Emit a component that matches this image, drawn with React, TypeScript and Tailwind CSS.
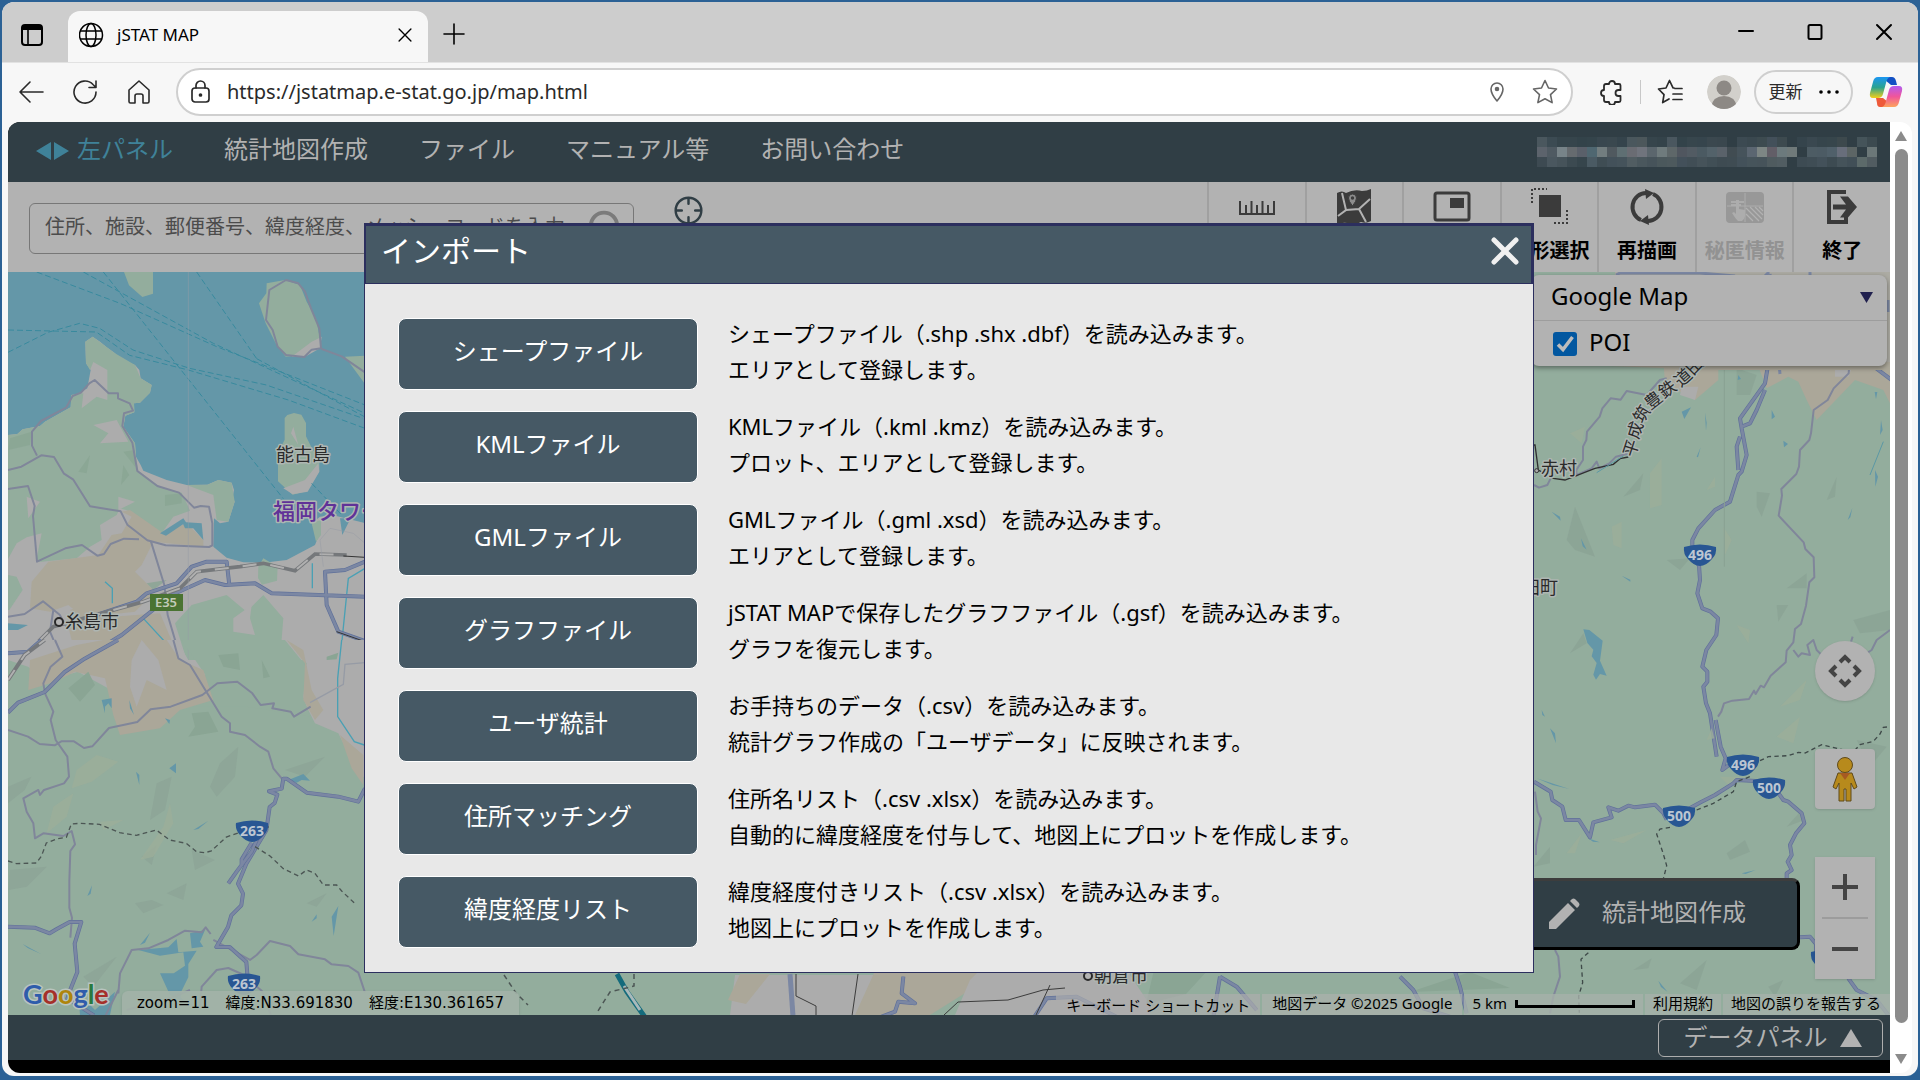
import type { ReactNode } from 'react';

const IMPORT_ITEMS = [
  { label: 'シェープファイル', lines: ['シェープファイル（.shp .shx .dbf）を読み込みます。', 'エリアとして登録します。'] },
  { label: 'KMLファイル', lines: ['KMLファイル（.kml .kmz）を読み込みます。', 'プロット、エリアとして登録します。'] },
  { label: 'GMLファイル', lines: ['GMLファイル（.gml .xsd）を読み込みます。', 'エリアとして登録します。'] },
  { label: 'グラフファイル', lines: ['jSTAT MAPで保存したグラフファイル（.gsf）を読み込みます。', 'グラフを復元します。'] },
  { label: 'ユーザ統計', lines: ['お手持ちのデータ（.csv）を読み込みます。', '統計グラフ作成の「ユーザデータ」に反映されます。'] },
  { label: '住所マッチング', lines: ['住所名リスト（.csv .xlsx）を読み込みます。', '自動的に緯度経度を付与して、地図上にプロットを作成します。'] },
  { label: '緯度経度リスト', lines: ['緯度経度付きリスト（.csv .xlsx）を読み込みます。', '地図上にプロットを作成します。'] },
];

const MENU = ['統計地図作成', 'ファイル', 'マニュアル等', 'お問い合わせ'];

const MASKED_USER = [
  '4a575e 3c4b53 36454c 36454c 33434a 34444b 39474f 3a484f 35444c 4a575d 4c575b 36454c 34434a 4a575f 33434a 37464d 36454d 3b484f 3a474e 303e45 3c4a52 3a484f 3d4b50 43505a 3d4a4f 303e45 35444c 3a4850 36454c 37464c 3d494d 303e45 45545a 3c4a50',
  '5c636c 4f5a62 788489 666b6f 5a606a 4f6771 727d7f 50595f 5f6f73 6a6c73 70747d 5b666d 6f7b7d 5e6769 50565f 525b63 4b5a62 53626a 5a626a 414c52 46535b 5b6671 7d8684 625e67 6c7a7d 707a7a 303e45 4d5c64 4c5b64 50606a 686e7b 5c6565 303e45 6b7778',
  '3d4a52 4a575f 46535a 3c4a51 36454c 4a5a63 3f4d54 43515a 45535b 515d62 4a575d 46535a 4b585c 4d595d 43505a 414e56 46535a 414f56 3e4b52 3f4c53 43515a 46545b 46535a 4f5b5f 515d62 303e45 3d4b53 3f4d55 43515a 3d4b52 45535a 414f57 5c6a6a 515c61',
].map((row) => row.split(' '));

function Stroke({ size = 26, w = 1.6, children }: { size?: number; w?: number; children: ReactNode }) {
  return (
    <svg
      width={size}
      height={size}
      viewBox="0 0 26 26"
      fill="none"
      stroke="currentColor"
      strokeWidth={w}
      strokeLinecap="round"
      strokeLinejoin="round"
      aria-hidden="true"
      className="shrink-0"
    >
      {children}
    </svg>
  );
}

function TabBar() {
  return (
    <div className="flex h-[60px] items-stretch bg-[#cdcdcd] text-black">
      <button aria-label="タブ操作" className="flex w-[66px] items-center justify-center pr-[6px] pt-[6px]">
        <Stroke w={2}>
          <rect x="3" y="3" width="20" height="20" rx="3" />
          <path d="M3 6.500h20M9 8v15" strokeWidth="1.6" />
          <path d="M4 4h18v4H4z" fill="currentColor" stroke="none" />
        </Stroke>
      </button>
      <div className="mt-[9px] flex w-[360px] items-center rounded-t-xl bg-[#f7f7f7] pb-1 pl-[11px] pr-3">
        <Stroke w={1.5}>
          <circle cx="12" cy="13" r="11.5" />
          <ellipse cx="12" cy="13" rx="5" ry="11.5" />
          <path d="M1.500 9h21M1.500 17h21" />
        </Stroke>
        <span className="ml-3 flex-1 text-[17px]">jSTAT MAP</span>
        <button aria-label="タブを閉じる">
          <Stroke size={22}>
            <path d="M6 6l14 14M20 6L6 20" />
          </Stroke>
        </button>
      </div>
      <button aria-label="新しいタブ" className="flex w-[52px] items-center justify-center pt-1">
        <Stroke>
          <path d="M13 3v20M3 13h20" />
        </Stroke>
      </button>
      <div className="ml-auto flex">
        <button aria-label="最小化" className="flex w-[69px] items-center justify-center">
          <Stroke w={2}>
            <path d="M6 12h14" />
          </Stroke>
        </button>
        <button aria-label="最大化" className="flex w-[69px] items-center justify-center">
          <Stroke w={2}>
            <rect x="6.500" y="6" width="13" height="14" rx="1.500" />
          </Stroke>
        </button>
        <button aria-label="閉じる" className="flex w-[69px] items-center justify-center">
          <Stroke w={2}>
            <path d="M6 6l14 14M20 6L6 20" />
          </Stroke>
        </button>
      </div>
    </div>
  );
}

function CopilotLogo() {
  return (
    <svg width="34" height="32" viewBox="0 0 34 32" aria-hidden="true">
      <defs>
        <linearGradient id="cp1" x1="0" y1="0" x2="0" y2="1">
          <stop offset="0" stopColor="#1b96f3" />
          <stop offset="0.5" stopColor="#2aa38f" />
          <stop offset="1" stopColor="#f3cf17" />
        </linearGradient>
        <linearGradient id="cp2" x1="0" y1="0" x2="0" y2="1">
          <stop offset="0" stopColor="#b35cf0" />
          <stop offset="0.5" stopColor="#f0559b" />
          <stop offset="1" stopColor="#fda35c" />
        </linearGradient>
      </defs>
      <path d="M16 1h7q3 0 4 4l1 4h-6l-6-5z" fill="#1351c4" />
      <path d="M18 31h-7q-3 0-3-4l-1-5h7l5 4z" fill="#ee5a3a" />
      <path d="M9 1h12q-3 1-4 6l-3 11q-1 4-5 4H4q-4 0-3-5L4 6q1-5 5-5z" fill="url(#cp1)" />
      <path d="M25 31H13q3-1 4-6l3-11q1-4 5-4h5q4 0 3 5l-3 11q-1 5-5 5z" fill="url(#cp2)" />
    </svg>
  );
}

function AddressBar() {
  return (
    <div className="flex h-[60px] items-center border-t border-[#e2e2e2] bg-[#f7f7f7] pb-[2px] pl-4 pr-[15px] text-[#2a2a2a]">
      <div className="flex gap-[28px]">
        <button aria-label="戻る">
          <Stroke>
            <path d="M25 13H2M12 3L2 13l10 10" />
          </Stroke>
        </button>
        <button aria-label="更新">
          <Stroke>
            <path d="M24 13a11 11 0 1 1-3-7.500l3 3M24 2v6.500h-7" />
          </Stroke>
        </button>
        <button aria-label="ホーム">
          <Stroke>
            <path d="M3 11L13 2l10 9v11.500q0 1.500-1.500 1.500H17v-7q0-2-2-2h-4q-2 0-2 2v7H4.500Q3 24 3 22.500z" />
          </Stroke>
        </button>
      </div>
      <div className="ml-6 flex h-12 flex-1 items-center rounded-full border-2 border-[#cfcfcf] bg-white pl-[9px] pr-[13px]">
        <Stroke w={1.7}>
          <rect x="5" y="9" width="17" height="14" rx="3" />
          <path d="M9 9V6.500a4.500 4.500 0 0 1 9 0V9" />
          <circle cx="13.500" cy="16" r="1" fill="currentColor" />
        </Stroke>
        <input
          aria-label="アドレス"
          readOnly
          defaultValue="https://jstatmap.e-stat.go.jp/map.html"
          className="ml-[14px] min-w-0 flex-1 bg-transparent text-[20px] outline-none"
        />
        <span className="flex items-center gap-[22px] text-[#666]">
          <button aria-label="位置情報">
            <Stroke>
              <path d="M13 22q-6-7-6-12a6 6 0 0 1 12 0q0 5-6 12z" />
              <circle cx="13" cy="10" r="1.500" fill="currentColor" />
            </Stroke>
          </button>
          <button aria-label="お気に入りに追加">
            <Stroke>
              <path d="M13 1.500l3.500 7.500 8 1-6 5.600 1.600 8L13 19.700 5.900 23.600l1.600-8-6-5.600 8-1z" />
            </Stroke>
          </button>
        </span>
      </div>
      <button aria-label="拡張機能" className="ml-[25px]">
        <Stroke w={1.8}>
          <path d="M8 5h3a3 3 0 0 1 6 0h4q1.500 0 1.500 1.500V11h-2a3 3 0 0 0 0 6h2v4.500q0 1.500-1.500 1.500h-4a3 3 0 0 1-6 0H8q-2 0-2-2v-4a3 3 0 0 1 0-6V7q0-2 2-2z" />
        </Stroke>
      </button>
      <span className="mx-4 h-6 w-px bg-[#c8c8c8]" />
      <button aria-label="お気に入り">
        <Stroke w={1.7}>
          <path d="M17 9l-1-.2L12.500 1.500 9 9l-7.500 1 5.500 5.600-1.300 8L12 20M18 9.500h7M16 15h9M16 20.500h9" />
        </Stroke>
      </button>
      <button aria-label="プロフィール" className="ml-6">
        <svg width="34" height="34" viewBox="0 0 34 34" aria-hidden="true" className="rounded-full">
          <circle cx="17" cy="17" r="17" fill="#d2d0cb" />
          <circle cx="17" cy="13" r="7.500" fill="#8d8985" />
          <path d="M4 32q2-11 13-11t13 11l-4 2H8z" fill="#8d8985" />
        </svg>
      </button>
      <button className="ml-[13px] flex h-11 w-[99px] items-center justify-center gap-4 rounded-full border-2 border-[#cfcfcf] text-[17px]">
        更新
        <svg width="20" height="4" viewBox="0 0 20 4" aria-hidden="true">
          <circle cx="2" cy="2" r="1.800" />
          <circle cx="10" cy="2" r="1.800" />
          <circle cx="18" cy="2" r="1.800" />
        </svg>
      </button>
      <button aria-label="Copilot" className="ml-4">
        <CopilotLogo />
      </button>
    </div>
  );
}

function MenuBar() {
  return (
    <nav className="flex h-[60px] items-center bg-[#303e45] pl-7 pr-[13px] text-2xl text-[#b2b2b2]">
      <ul className="flex items-center gap-[51px] pb-[6px]">
        <li>
          <a href="#panel" className="flex items-center gap-2 text-[#3f8299]">
            <svg width="33" height="18" viewBox="0 0 33 18" fill="currentColor" aria-hidden="true" className="mt-1">
              <path d="M15 0v18L0 9zM18 0v18l15-9z" />
            </svg>
            左パネル
          </a>
        </li>
        {MENU.map((m) => (
          <li key={m}>
            <a href="#menu">{m}</a>
          </li>
        ))}
      </ul>
      <svg width="340" height="30" viewBox="0 0 340 30" shapeRendering="crispEdges" aria-hidden="true" className="ml-auto">
        {MASKED_USER.map((row, y) =>
          row.map((c, x) => <rect key={`${x}-${y}`} x={x * 10} y={y * 10} width="10" height="10" fill={`#${c}`} />),
        )}
      </svg>
    </nav>
  );
}

const TOOLS: { label: string; disabled?: boolean; icon: ReactNode }[] = [
  {
    label: '距離計測',
    icon: <path d="M2 13v13h34V13M8 26v-9M13.500 26V13M19 26v-9M24.500 26V13M30 26v-9" fill="none" stroke="currentColor" strokeWidth="2" />,
  },
  {
    label: '背景地図',
    icon: (
      <>
        <path d="M2 5q5-3 9 0 8-4 16-2 5 0 9-2v32q-5 3-10 1-7 4-14 1-5-1-10 2z" fill="currentColor" />
        <path d="M7 5l4 17-8 6M11 22l13-1 11-10M24 21l7 13" fill="none" stroke="#b2b2b2" strokeWidth="2" />
        <path d="M17.500 18q-4-5-4-8a4 4 0 0 1 8 0q0 3-4 8z" fill="#8c8c8c" stroke="#3b3b3b" />
        <circle cx="17.500" cy="10" r="1.700" fill="#3b3b3b" />
      </>
    ),
  },
  {
    label: '索引図',
    icon: (
      <>
        <rect x="2" y="5" width="34" height="27" rx="2" fill="none" stroke="currentColor" strokeWidth="3" />
        <rect x="17" y="10" width="14" height="10" fill="currentColor" />
      </>
    ),
  },
  {
    label: '図形選択',
    icon: (
      <>
        <rect x="8" y="7" width="22" height="22" fill="currentColor" />
        <path d="M1 15V1h15M36 22v13H21" fill="none" stroke="currentColor" strokeWidth="2" strokeDasharray="2 2" />
      </>
    ),
  },
  {
    label: '再描画',
    icon: (
      <>
        <path d="M13 32A13.500 14 0 0 1 18 5M25 6a13.500 14 0 0 1-5 27" fill="none" stroke="currentColor" strokeWidth="4" />
        <path d="M17 1l9 4-8 6zM21 37l-9-4 8-6z" fill="currentColor" />
      </>
    ),
  },
  {
    label: '秘匿情報',
    disabled: true,
    icon: (
      <>
        <rect x="0" y="4" width="38" height="31" rx="4" fill="#989898" />
        <path d="M19 5v29M1 18h36" stroke="#adadad" />
        <path d="M20 20l13 13M20 26l7 7M24 19l12 12M29 19l8 8M33 19l4 4" stroke="#b2b2b2" strokeWidth="1.200" />
        <path d="M5 14h13M5 17h10" stroke="#b2b2b2" strokeWidth="1.500" />
        <path d="M10 12h3v9l6 1v6q-1 4-3 5h-4q-3-3-6-8l2-1 2 2z" fill="#adadad" />
      </>
    ),
  },
  {
    label: '終了',
    icon: (
      <>
        <path d="M23 4H6v30h17v-5" fill="none" stroke="currentColor" strokeWidth="4" />
        <path d="M10 16.500h13l-6-8h8l9 10.500-9 10.500h-8l6-8H10z" fill="currentColor" />
      </>
    ),
  },
];

function ToolBar() {
  return (
    <div className="flex h-[90px] bg-[#b2b2b2]">
      <div className="ml-[21px] mt-[21px] flex h-[51px] w-[605px] items-center rounded-md border border-[#777] pl-[15px] pr-3">
        <input
          aria-label="検索"
          placeholder="住所、施設、郵便番号、緯度経度、メッシュコードを入力"
          className="min-w-0 flex-1 bg-transparent pb-1 text-xl outline-none placeholder:text-[#4c4c4c]"
        />
        <button aria-label="検索する" className="pb-1 text-[#7b7b7b]">
          <Stroke size={34} w={3}>
            <circle cx="13" cy="12" r="10" />
            <path d="M20 19l5 6" />
          </Stroke>
        </button>
      </div>
      <button aria-label="現在地" className="ml-10 mt-[14px] h-7 text-[#303e45]">
        <Stroke size={29} w={2.2}>
          <circle cx="13" cy="13" r="11.5" />
          <path d="M13 2v5M13 19v5M2 13h5M19 13h5" />
        </Stroke>
      </button>
      <div className="ml-auto flex w-[683px]">
        {TOOLS.map((t) => (
          <button
            key={t.label}
            disabled={t.disabled}
            className="flex flex-1 flex-col items-center border-l-2 border-[#a0a0a0] pt-[6px] text-xl font-bold text-black disabled:text-[#929292]"
          >
            <svg width="38" height="38" viewBox="0 0 38 38" className="text-[#3b3b3b]" aria-hidden="true">
              {t.icon}
            </svg>
            <span className="mt-[10px] whitespace-nowrap leading-[30px]">{t.label}</span>
          </button>
        ))}
      </div>
    </div>
  );
}

function Road({ d, big }: { d: string; big?: boolean }) {
  return (
    <g fill="none" strokeLinejoin="round">
      {big && <path d={d} stroke="#60719a" strokeWidth="12" />}
      <path d={d} stroke={big ? '#7b87a3' : '#80869a'} strokeWidth={big ? 8 : 6} />
    </g>
  );
}

function Shield({ x, y, n }: { x: number; y: number; n: string }) {
  return (
    <g transform={`translate(${x} ${y})`}>
      <path d="M-16-8q16-5 32 0 1 7-4 12-6 7-12 7t-12-7q-5-5-4-12z" fill="#285693" />
      <text y="5" textAnchor="middle" fontSize="14" fontWeight="700" fill="#bcc6d2">
        {n}
      </text>
    </g>
  );
}

const RAIL_LABEL: [string, number, number, number][] = [
  ['平', 1637, 450, -72],
  ['成', 1641, 432, -72],
  ['筑', 1647, 417, -58],
  ['豊', 1657, 405, -38],
  ['鉄', 1671, 394, -36],
  ['道', 1687, 382, -42],
  ['田', 1699, 370, -46],
];

// Terrain and roads are digitised in tiles at three units per pixel.
function MapCanvas() {
  return (
    <svg viewBox="8 272 1882 743" preserveAspectRatio="xMidYMid slice" className="absolute inset-0 h-full w-full" aria-hidden="true">
      <rect x="0" y="260" width="1900" height="780" fill="#93ad9d" />
      <g transform="translate(0 260) scale(.33333)">
        <path d="M0 0h1140v1200H0z" fill="#6497a8" />
        <path
          fill="#acacac"
          d="M0 528L52 522 68 508 120 498 135 485 212 442 214 405 232 402 262 385 272 330 258 310 256 245 278 230 300 245 320 262 345 280 360 298 405 315 418 330 422 355 455 375 450 398 420 428 402 430 403 457 376 467 370 500 405 550 408 590 422 615 430 632 500 660 560 675 622 674 655 660 695 668 702 690 698 710 704 725 685 785 660 790 642 775 640 860 680 893 730 907 790 908 860 900 945 855 955 830 945 812 935 790 960 770 1000 766 1140 800V1200H0z"
        />
        <path
          fill="#93ad9d"
          d="M0 528L52 522 68 508 120 498 135 485 212 442 214 405 250 400 245 445 290 410 322 420 322 330 280 306 270 330 258 310 256 245 278 230 345 280 405 315 422 355 455 375 450 398 420 428 402 430 403 457 376 467 370 500 405 550 408 590 415 632 480 680 545 698 560 730 570 752 520 770 485 820 395 755 360 745 350 765 300 795 305 840 270 860 230 895 125 905 108 905 125 820 80 832 50 850 0 940z"
        />
        <path fill="#93ad9d" d="M560 675L622 674 655 660 695 668 704 725 685 785 650 780 640 705zM0 940l50 10 18 40-40 60H0zM775 920l15-25 43 25-2 42-45 12-12-20zM575 1035l105-30 60 50 50-50 60 70-10 125H560l-35-110zM935 790l28-10v45l-15 20z" />
        <path fill="#acacac" d="M280 495l70-15 35 65-85 5 25-30zM355 710l50 15-50 25zM700 1075l55-40-5 40 15 50-65-10zM80 710l40 15-35 50z" />
        <path fill="#aba799" d="M365 755l25-5 100 70 70-30 50 50v20l-150-15-35 70-20 20 60 60-60 60-90 10-50 20-60-50-55 20-60-10 5-80 50-60 150-20 40-60 30-5 30-50zM200 1080l280-20 60 140H230zM210 1050l80-30 40 50-60 30z" />
        <path fill="#8aa594" d="M30 535l65-20-5 40-65 15zM235 635l35-50-10 55zM370 575l35-5v50zM495 705l50-5v30l-50 8zM370 615l18 30-25 30zM410 75l28-30 4 60zM440 970l60-10-40 30z" opacity=".8" />
        <path fill="#93ad9d" d="M372 36h87v65l-32 10-40-35zM800 70l55-10 45 15 20 50 28 50 12 62-48 48-55 5-30-40-30-60-20-60 22-30zM1035 290l60-3v85zM862 465l20-6 22 5 14 25v40l20 40 20 25v40l-40 60-40 10-44-40v-85l20-40v-65z" />
        <path fill="#acacac" d="M880 500l15 55-22-35zM955 610l3 25-35 60-45 8-28-18 65-25zM965 230l-5 35-45 25-40 0 60-45z" />
        <path fill="#6497a8" d="M535 785l70 5 5 50-30-35-25 0-8-18zM480 820l70-45 8 12-60 40zM1020 775h32l-25 50zM24 1090l60 5-30 15H24z" />
        <g fill="none" stroke="#388a9e" strokeWidth="3" strokeDasharray="18 9">
          <path d="M110 36l250 94 290 130 445 175M250 36l390 214 455 210M310 36l230 290 310 390M590 36l180 260M24 210l265 6 100 70 176 44 300 90 230 85M24 277l120-60 95-27 60 15 100 65 170 55 230 50 290 100M770 296l325 175M935 670l90 95" />
        </g>
        <g fill="none" stroke="#4aa0b4" strokeWidth="6">
          <path d="M1095 925l-50 30-25 245M937 910v75M315 965l22 20v45M430 1075l60 65 12 35" strokeWidth="4" />
        </g>
        <Road d="M24 630l40-10 60-34 38 5 30 50 28 18 50 80 92 15 20 40 60 47 55 15 130 5 10-5V790l-10-50-25-2-20 5-45-45-65-20-60-45-15-85-30-50 5-38 27-8-10-22-35-15v-15h-28l-42-40-16 10-25 28-25 10-20 35-75 40-27 32v42l15 30M24 687l60-9 20 60-5 30 12 137 85-40 50-10 46 32 20-5 20-30 40-16 45 2" />
        <Road d="M858 60l-50 30-10 90 20 30 15 50 25 25 55 6 22-22 28-4-5-60-25-60-18-50-20-25zM965 267l60 22 70 48M453 845l40 130 10 90 40 135" />
        <Road d="M24 1070l50-8 55-38 50 40 20 36M160 1050l-10 65 38 90" />
        <Road big d="M290 1065l120-40 30-25 90-30 45-50 45-15h60l8 70M235 1205l130-80 150-120 100-45 60 15 90-5 50 30 280 10M1095 905l-60 25-60 5 5 100 35 80 85 30M24 1175h60l30-15" />
        <path d="M50 1200l30-20 80-80 270-75 110-40 50-50 130-15 70-10 95 22 60-50 95 3" fill="none" stroke="#75787b" strokeWidth="11" />
        <path d="M50 1200l30-20 80-80 270-75 110-40 50-50 130-15 70-10 95 22 60-50 95 3" fill="none" stroke="#b0b0b0" strokeWidth="6" strokeDasharray="42 42" />
        <path d="M1030 888l65 4M1010 1115l85 30" stroke="#333" strokeWidth="3" fill="none" />
        <path d="M960 840l10 80M960 840l30-35 70 15 35 30M565 36v1164" fill="none" stroke="#969ba5" strokeWidth="3" opacity=".5" />
      </g>
      <g transform="translate(0 640) scale(.33333)">
        <path fill="#93ad9d" d="M0 60h1140v1080H0z" />
        <path fill="#acacac" d="M0 60h24l60 20 60 40 90-25 90 50 65-40h240l5-45H565L530 0h330l60 70-15 100 40 80 70 30 35 70 60 90h40V0H0z" />
        <path fill="#93ad9d" d="M545 0h310l65 80-10 90 20 60-190-30-160 0 60-60z" />
        <path fill="#aba799" d="M90 60l140-45 80-15h190l40 60 70 30 30 90-100 30-60 55-120 20-20-60-25-110-90-20-60 30-80 25zM860 0l50 30 25 120 35 60-25 30-35-60 5-110zM1020 285l70 60v90l-35-50z" />
        <path fill="#acacac" d="M395 60l30-60 50 60 25 90-60-30-30 80-20-60z" />
        <path fill="#8aa594" d="M205 145l60-50 20 40-45 50zM575 220l50-5 30 60-90 15 20-30zM980 50l35-12-5 20-30 2zM655 45l60-5 5 50-50-10zM785 60l25 50-20 5z" />
        <path fill="#8ba395" opacity=".7" d="M24 440l70-30-20 40-50 40zM660 370l55-50-10 90-55 60 -20-30zM855 390l120-40-60 60zM470 430l45-20-20 100-45 30zM425 650l45-35-15 60zM30 690l110-10-60 60-55 10zM405 790l50-10 35 15-60 25zM500 760l60-30-10 50zM575 630l70 30-60 30zM920 790l60-30-30 40zM250 1010l100-60-70 90z" />
        <path fill="#9cae9a" opacity=".8" d="M230 390l60-45 65 20-80 60-60 20zM160 500l60-40-20 70-60 50zM420 660l70-100 20-70 10 60-60 100zM300 545l70-5-60 30z" />
        <path fill="#6497a8" d="M305 180l30-5v30l-10-15-10 10v20zM508 385l20-15v30zM865 420l45-18 20 20-25-2-15 8zM415 930l90-8 25-25 5 40 55-5-25 40v40l-20 40-5 30-20-30-15-5 5-40 45-30-5-40-70 10zM570 880l45-10-15 35 10 15-35 5zM480 1000l70 0-25 55 30 30-45-20zM235 1060l50 50 60-55-15 70H240zM495 235l15 5-2 12zM580 570l45-28-30 25zM262 768l14-32-4 25zM935 845l15-22v12zM995 830l20-32-14 90zM420 915l30-37-15 30zM68 912l55 30-40-18zM408 395l10 10v30zM388 180l14 45-12-20z" />
        <Road d="M165 0l22 50-35 30-22 50 5 30 25 55-8 25 15 60 35 50 5 60-15 20-60 20-12 15-5-15-45 25 10 40 20 35 5 45 25-15 60 8 25-15 10 40-14 20-3 90 0 80 8 30-5 60M24 270l60 20 35 22 45 4 20-12h38l30 20 25-5 50-55 85-18 40-38 60-8 95-35 45-35 60-5 45 35 25 35 40-5-5 15 55 10 10 15 50-30" />
        <Road d="M520 0l15 55 35 20 95 155 25 20v25l45 10 45 35 25 15 15 50 25 30M355 1060l5-60 35-70 50-5 60-25 50-28 50 5 12-15 15 20M640 900l110 60 20-15 40-42 60 15 25 25 80 15 20 15 50 5 30 20 20 60M600 1100l5-60 45-50 35-6 40 18 60 50 30 80M355 1050l-40 80M380 1110l130-35 60-25" />
        <Road big d="M24 218l30-30 80-32 60-60 60-40 100-56M24 860l80 3 45 17 20-12 40-22h35l-20 65 8 85-20 50-10 30 80 50M1095 445l-20 40-60-15-95-12-60-42-10 0-5 30-38 8 25 10-8 25-15 12-10 70-60 100-25 60 15 30-5 35-30 30-10 35-35 60 40 0 50 45 5 60M24 40l60-5 40-35" />
        <Road big d="M770 600l-15 35-45 60-25 35M755 608l-30 50v20" />
        <path d="M24 120l50-75 60-45" fill="none" stroke="#75787b" strokeWidth="12" />
        <path d="M24 120l50-75 60-45" fill="none" stroke="#b0b0b0" strokeWidth="6" strokeDasharray="36 36" />
        <path
          d="M24 663l25 8 60-2 15-20 15-40 30-12 30-5 15-40 25-2 60 3 60 25 50 8 60-16 40 30 50 10 30 25 25 3 20-5 45-42 90-30 40 0M765 620l45 28 40 38 45 22 25-18 25 10 25 35h40l15 18 40 38"
          fill="none"
          stroke="#4c5654"
          strokeWidth="4"
          strokeDasharray="14 10"
        />
        <path d="M1025 0l-12 115v115l50 75 30 10" fill="none" stroke="#4aa0b4" strokeWidth="4" />
        <path d="M1095 68l-60 5-5 60-100 55" fill="none" stroke="#969ba5" strokeWidth="4" />
      </g>

      {/* strip below the dialog */}
      <path fill="#acacac" d="M730 1015l5-40h160l20 40z" />
      <path fill="#aba799" d="M728 1000l12-26h30l-24 30zM880 960h110l-20 30-40 25h-75z" />
      <path fill="#acacac" d="M955 1015l15-35 20-20h130l30 45v10z" />
      <path fill="#8aa594" d="M1146 1004l8-34h54l-22 24zM1410 992l60-20 40 16z" />
      <g transform="translate(1500 940) scale(.33333)">
        <Road big d="M-300 110l40 40 30 55 80 25M-1790 110l-5 50 40 30-50-5-10 30-40 15v40M-160 40l20 40 20 60 20 80" />
        <Road big d="M-1400 235l40-60 90-5 120 60M-840 110l-20 120M-840 110l50 30 60 70" />
      </g>
      <path d="M617 974l10 18 20 28" stroke="#146b7c" strokeWidth="5" fill="none" />
      <path d="M624 986l16 24" stroke="#a9b9ba" strokeWidth="3" fill="none" />
      <path d="M944 1015l14-13 50-2 35-10 22-2M1036 1015l14-30M858 974l-6 42M796 974v22l20 10v10" stroke="#3c3c3c" fill="none" />
      <path d="M790 974l3 42" stroke="#7b87a3" strokeWidth="5" />
      <path d="M504 975l12 18 12 12M634 974v12l-24 6-14 22" stroke="#4c5654" strokeWidth="1.500" strokeDasharray="5 4" fill="none" />

      <g transform="translate(1520 340) scale(.33333)">
        <path fill="#aba799" d="M430 60h165v60l-70 60-90-50zM700 40h410v150l-20-40-85-30-115 120-30-60-25-55-30-15-65 35z" />
        <path fill="#acacac" d="M945 60h60l-20 50-40 0zM485 140l50 0-10 40-45-15z" />
        <path fill="#8ba395" opacity=".8" d="M650 85l60 20-20 60-40 0zM310 470l60-70-10 50zM710 455l40 5-25 70-15-30zM165 500l60 150-60-20-25-30zM440 660l70-5-30 35zM770 795l35 0-30 50zM1000 840l110-30v60l-90 10zM150 940l40-60 10 30zM920 480l30-70-5 60zM860 700l-60 45h60z" />
        <path fill="#9cae9a" opacity=".8" d="M390 400l35-45v140l-35 10zM275 560l30-15v80l-25-10zM610 560l25 40-20 45zM150 280l45-20-10 50zM560 450l25-40v30zM650 855l40 15-5 40zM780 1100l80-80-20 60z" />
        <path fill="#6497a8" d="M190 868l18 2 40 32-8 60 20 45-20-5-12 17-8-15 10-35-15-20 5-20-18-20zM485 215l28-13-20 35zM555 218l5 30-2 25zM755 210l10 20-10 8zM790 302l14 10-12 10zM655 105l8 12-10 3zM530 350l12-28-8 30zM1065 390l9 20-8 30zM1083 240l5 30-8 15zM983 540l14-36-6 28zM95 515l25 15 2 12zM183 595l17 34-12-10zM305 707l26 12v6zM65 1110l10 20-8-5zM1064 156h8l-4 22z" />
        <Road d="M440 115l-20 5-40 45-60-12-18 26-30-4-25 30-8 25-38 45-2 25-10 20v40l-20 30v20M170 405l45-20 15-20 8 20 30-15 20-20 40-10M988 75l-2 25-45 45-18 35-42 30-8 70-5 20-28 30-3 50-8 22-45 45 2 20-10 60 75 80 5 20 25 25 2 60-15 15-10 70-15 55-18 15-5 40-20 25-3 35-45 40-20 35-10-5-15 25-5-10-15 25-50 5-25 8-8 25-10 15M820 930l15 20 10-10 25 5-8-30 18-15 10 30 20 20M1110 870l-40 30-15 30-30 20-35-35 8-25" />
        <Road d="M42 435l15 8 25-8 10-20" />
        <Road big d="M745 70l-10 60-75 105 5 30 15 80-15 50-10 10-25 80-45 25-50 55-18 35 0 60 20 15 3 45-8 40 15 45 25 10 22 20-5 50-30 45-12 50 15 15v30l-12 15 8 50 12 30 20 130M735 150l-25 60-20 40-25 10M660 290l-10 30 5 70" />
        <Road big d="M1055 75l60 45" />
        <path d="M35 315h10l10 75 45 25 35 5 90-35 55-12 20-17 25-5" fill="none" stroke="#303030" strokeWidth="4" />
        <circle cx="50" cy="392" r="6" fill="#aaa" stroke="#333" strokeWidth="3" />
        <path d="M613 80v600" stroke="#89a193" strokeWidth="3" />
        <path d="M230 398l80-50M1090 305l-40 100" stroke="#5a98a5" strokeWidth="3" />
      </g>
      <g transform="translate(1520 720) scale(.33333)">
        <path fill="#8ba395" opacity=".8" d="M620 400l55-40 15 35-60 25zM800 320l45-50 8 30zM40 440l50-60v50zM745 800l45-20-25 50zM340 750l55-35-10 30zM480 790l80-70 -30 90zM1010 60l90 20-50 60z" />
        <path fill="#9cae9a" opacity=".8" d="M270 360l110-30-70 40zM140 400l45-60-20 60zM560 60l15-35 8 30zM770 50l70-60-20 80zM600 170l80 0-50 30z" />
        <path fill="#6497a8" d="M90 25l15 15 3 30zM50 175l98 32-50-12zM265 402l58 9zM598 437l42 5zM665 460l42-10-30 12zM415 782l28 34-20-15zM205 355l34 12-20-2z" />
        <Road d="M45 215l8 60 10 20-15 80v30M105 690l10 20 5 60-20 60-10 50" />
        <Road big d="M587 0l15 80 15 35-10 35 40-30M42 185l50 30 5 25 30 20 10 40 40 0 33 52 10-45 55-15-10-30 30 10 30-15 20 5 60-8 25 25 10 20M490 275l55-30 40-20 55-35 10-10 100 5 40 55 15 5 40 35 8 30-25 30-18 35 5 30-12 20 12 25-15 10v35M840 652l30-2 18 22v30M985 775l25 35 60 30 35 45" />
        <path
          d="M720 122l25-12 60-3 30-10 20 2 50-25 50 12 45 10 20-22 40-10 20-22 10-20 20-2M530 270l50-20 60-35 10-30 40-15M450 322l-30 5-10 15 20 60 10 35-10 40M205 698l-22 20 5 70-12 40 2 50"
          fill="none"
          stroke="#3f4a49"
          strokeWidth="4"
          strokeDasharray="13 10"
        />
      </g>

      {/* sliver visible above the layer switcher */}
      <path d="M1615 272h275v90h-275z" fill="#acaba3" />
      <path d="M1616 275l4-2h80l35 3M1765 276l4-4M1810 276v-4M1888 300v12M1780 374l-10-100" stroke="#7b87a3" strokeWidth="3" fill="none" />
      <path d="M1611 366h279v4h-180z" fill="#aba799" />

      <g fontSize="18" fill="#2a2a2a" stroke="#aeb6b2" strokeWidth="3" paintOrder="stroke" strokeLinejoin="round">
        <text x="276" y="461">能古島</text>
        <text x="65" y="628">糸島市</text>
        <text x="1541" y="475">赤村</text>
        <text x="1522" y="594">田町</text>
        <text x="1094" y="982">朝倉市</text>
        <text x="273" y="519" fontSize="22" fontWeight="500" fill="#603298">
          福岡タワー
        </text>
        {RAIL_LABEL.map(([c, x, y, r]) => (
          <text key={c} transform={`translate(${x} ${y}) rotate(${r})`} textAnchor="middle" fontSize="17">
            {c}
          </text>
        ))}
      </g>
      <g fill="#b4b4b4" stroke="#2a2a2a" strokeWidth="2">
        <circle cx="59" cy="622" r="4" />
        <circle cx="1088" cy="976" r="4" />
      </g>
      <rect x="150" y="594" width="33" height="17" fill="#4a7332" />
      <text x="166" y="607" textAnchor="middle" fontSize="13" fontWeight="600" fill="#c3cbb9">
        E35
      </text>
      <Shield x={252} y={831} n="263" />
      <Shield x={244} y={984} n="263" />
      <Shield x={1700} y={555} n="496" />
      <Shield x={1743} y={765} n="496" />
      <Shield x={1769} y={788} n="500" />
      <Shield x={1679} y={816} n="500" />
      <Shield x={1827} y={960} n="500" />
    </svg>
  );
}

function GoogleLogo() {
  return (
    <svg width="96" height="38" viewBox="0 0 96 38" aria-label="Google" className="absolute bottom-0 left-3">
      <text x="3" y="27" fontSize="27" fontWeight="700" fontFamily="Lato, sans-serif" stroke="#b9c4bf" strokeWidth="3" paintOrder="stroke">
        <tspan fill="#2f5cab">G</tspan>
        <tspan fill="#a5302a">o</tspan>
        <tspan fill="#ae850c">o</tspan>
        <tspan fill="#2f5cab">g</tspan>
        <tspan fill="#2a7a3d">l</tspan>
        <tspan fill="#a5302a">e</tspan>
      </text>
    </svg>
  );
}

function LayerPanel() {
  return (
    <div className="absolute right-[3px] top-[3px] w-[356px] rounded-lg bg-[#b2b2b2] text-2xl text-black shadow-[0_2px_5px_rgba(0,0,0,0.4)]">
      <div className="relative h-[46px] border-b border-[#9d9d9d]">
        <select aria-label="背景地図の選択" className="h-full w-full appearance-none bg-transparent pb-1 pl-5 outline-none">
          <option>Google Map</option>
        </select>
        <svg width="13" height="11" viewBox="0 0 13 11" className="pointer-events-none absolute right-[14px] top-[17px]" aria-hidden="true">
          <path d="M0 0h13L6.500 11z" fill="#20204e" />
        </svg>
      </div>
      <label className="flex h-[45px] items-center pl-[22px]">
        <span className="relative h-6 w-6">
          <input type="checkbox" defaultChecked className="block h-6 w-6 appearance-none rounded-[3px] bg-[#0257a0]" />
          <svg viewBox="0 0 24 24" className="pointer-events-none absolute inset-0" fill="none" stroke="#bcbcbc" strokeWidth="3.500" aria-hidden="true">
            <path d="M5 12.500l5 5L19.500 5" />
          </svg>
        </span>
        <span className="ml-3 pb-1">POI</span>
      </label>
    </div>
  );
}

function MapControls() {
  return (
    <div className="absolute bottom-9 right-[15px] flex w-[60px] flex-col text-[#444]">
      <button aria-label="地図のカメラ コントロール" className="flex h-[60px] items-center justify-center rounded-full bg-[#b2b2b2] shadow">
        <svg width="36" height="36" viewBox="0 0 36 36" fill="none" stroke="currentColor" strokeWidth="4" aria-hidden="true">
          <path d="M13 9l5-5 5 5M13 27l5 5 5-5M9 13l-5 5 5 5M27 13l5 5-5 5" />
        </svg>
      </button>
      <button aria-label="ペグマン" className="mt-12 flex h-[60px] items-center justify-center rounded-sm bg-[#b2b2b2] shadow">
        <svg width="26" height="46" viewBox="0 0 26 46" fill="#b78a1c" stroke="#5f4a1a" strokeWidth="1" aria-hidden="true" className="mr-px">
          <path d="M6 17h14l5 14-3 2-3-6v18h-5V33h-2v12H7V27l-3 6-3-2z" />
          <path d="M8 17h10l-5 7z" fill="#a65a22" stroke="none" />
          <circle cx="13" cy="9" r="7.500" />
        </svg>
      </button>
      <div className="mt-12 flex flex-col items-center bg-[#b2b2b2] shadow">
        <button aria-label="ズームイン" className="flex h-[60px] items-center">
          <svg width="26" height="26" viewBox="0 0 26 26" stroke="currentColor" strokeWidth="4" aria-hidden="true">
            <path d="M13 0v26M0 13h26" />
          </svg>
        </button>
        <span className="h-[2px] w-[46px] bg-[#9c9c9c]" />
        <button aria-label="ズームアウト" className="flex h-[60px] items-center">
          <svg width="26" height="26" viewBox="0 0 26 26" stroke="currentColor" strokeWidth="4" aria-hidden="true">
            <path d="M0 13h26" />
          </svg>
        </button>
      </div>
    </div>
  );
}

function MapArea() {
  return (
    <div className="relative min-h-0 flex-1 overflow-hidden">
      <MapCanvas />
      <LayerPanel />
      <MapControls />
      <button className="absolute bottom-[65px] right-[90px] flex h-[72px] items-center rounded-lg border-[3px] border-black border-t-[#3d3d3d] bg-[#303e45] pl-7 pr-[51px] text-2xl text-[#b2b2b2]">
        <svg width="32" height="32" viewBox="0 0 32 32" fill="currentColor" aria-hidden="true" className="mr-[22px]">
          <path d="M1 31v-7L20 5l7 7L8 31zM22 3l2-2q1.500-1 3 0l4 4q1 1.500 0 3l-2 2z" />
        </svg>
        <span className="pb-1">統計地図作成</span>
      </button>
      <GoogleLogo />
      <p className="absolute bottom-0 left-[114px] flex h-6 items-center gap-4 rounded-tl-md rounded-tr-md bg-[#a3b2a9]/90 px-[15px] font-['DejaVu_Sans','Noto_Sans_CJK_JP',sans-serif] text-[15px] text-black shadow">
        <span>zoom=11</span>
        <span>緯度:N33.691830</span>
        <span>経度:E130.361657</span>
      </p>
      <div className="absolute bottom-0 right-0 flex h-[21px] items-stretch gap-[2px] text-[15px] leading-[18px] text-black">
        <button className="bg-[#acacac]/70 px-[10px]">キーボード ショートカット</button>
        <span className="bg-[#acb0ad]/70 px-[10px]">地図データ ©2025 Google</span>
        <span className="flex bg-[#a6b0aa]/80 px-2">
          5 km
          <span className="ml-2 mt-[6px] h-2 w-[120px] border-[3px] border-t-0 border-black" />
        </span>
        <a href="#terms" className="bg-[#a6b0aa]/80 px-2">
          利用規約
        </a>
        <a href="#report" className="bg-[#a6b0aa]/80 pl-2 pr-[9px]">
          地図の誤りを報告する
        </a>
      </div>
    </div>
  );
}

function ImportDialog() {
  return (
    <section role="dialog" aria-labelledby="import-title" className="w-[1170px] max-w-full border border-[#2c2f5e] bg-[#e8e8e8] text-black">
      <header className="flex h-[60px] items-center justify-between border-2 border-b border-l border-[#2c2f5e] bg-[#465965] pb-[6px] pl-[15px] pr-3 text-white">
        <h1 id="import-title" className="text-3xl font-normal">
          インポート
        </h1>
        <button aria-label="閉じる">
          <svg width="28" height="28" viewBox="0 0 28 28" stroke="#f0f0f0" strokeWidth="5" strokeLinecap="round" aria-hidden="true">
            <path d="M3 3l22 22M25 3L3 25" />
          </svg>
        </button>
      </header>
      <ul className="flex flex-col gap-[21px] px-[33px] pb-6 pt-[34px]">
        {IMPORT_ITEMS.map((item) => (
          <li key={item.label} className="flex gap-[30px]">
            <button className="h-[72px] w-[300px] shrink-0 rounded-lg border border-white bg-[#465965] pb-[6px] text-2xl text-white">{item.label}</button>
            <p className="-mt-[3px] text-[22px] leading-9">
              {item.lines[0]}
              <br />
              {item.lines[1]}
            </p>
          </li>
        ))}
      </ul>
    </section>
  );
}

export default function App() {
  return (
    <div className="h-screen bg-[#2b6195] px-[2px] pb-1 pt-[2px] font-['Noto_Sans','Noto_Sans_CJK_JP',sans-serif]">
      <div className="flex h-full flex-col overflow-hidden rounded-xl bg-[#f7f7f7]">
        <TabBar />
        <AddressBar />
        <div className="mx-[6px] mb-[3px] flex min-h-0 flex-1 overflow-hidden rounded-xl bg-white">
          <main className="relative flex min-w-0 flex-1 flex-col bg-black">
            <MenuBar />
            <ToolBar />
            <MapArea />
            <footer className="flex h-[45px] items-center justify-end bg-[#303e45] pr-[7px]">
              <button className="flex h-[38px] w-[225px] items-center justify-center gap-3 rounded-md border border-[#aeaeae] pl-1 text-2xl text-[#b2b2b2]">
                <span className="pb-[2px]">データパネル</span>
                <svg width="22" height="18" viewBox="0 0 22 18" fill="currentColor" aria-hidden="true">
                  <path d="M11 0l11 18H0z" />
                </svg>
              </button>
            </footer>
            <div className="h-[13px] shrink-0" />
            <div className="absolute inset-0 flex items-center justify-center">
              <ImportDialog />
            </div>
          </main>
          <div className="flex w-[22px] flex-col items-center gap-2 py-[9px]">
            <svg width="12" height="10" viewBox="0 0 12 10" fill="#8b8b8b" aria-hidden="true">
              <path d="M6 0l6 10H0z" />
            </svg>
            <div className="mb-[23px] w-[13px] flex-1 rounded-full bg-[#8b8b8b]" />
            <svg width="12" height="10" viewBox="0 0 12 10" fill="#8b8b8b" aria-hidden="true">
              <path d="M6 10l6-10H0z" />
            </svg>
          </div>
        </div>
      </div>
    </div>
  );
}
